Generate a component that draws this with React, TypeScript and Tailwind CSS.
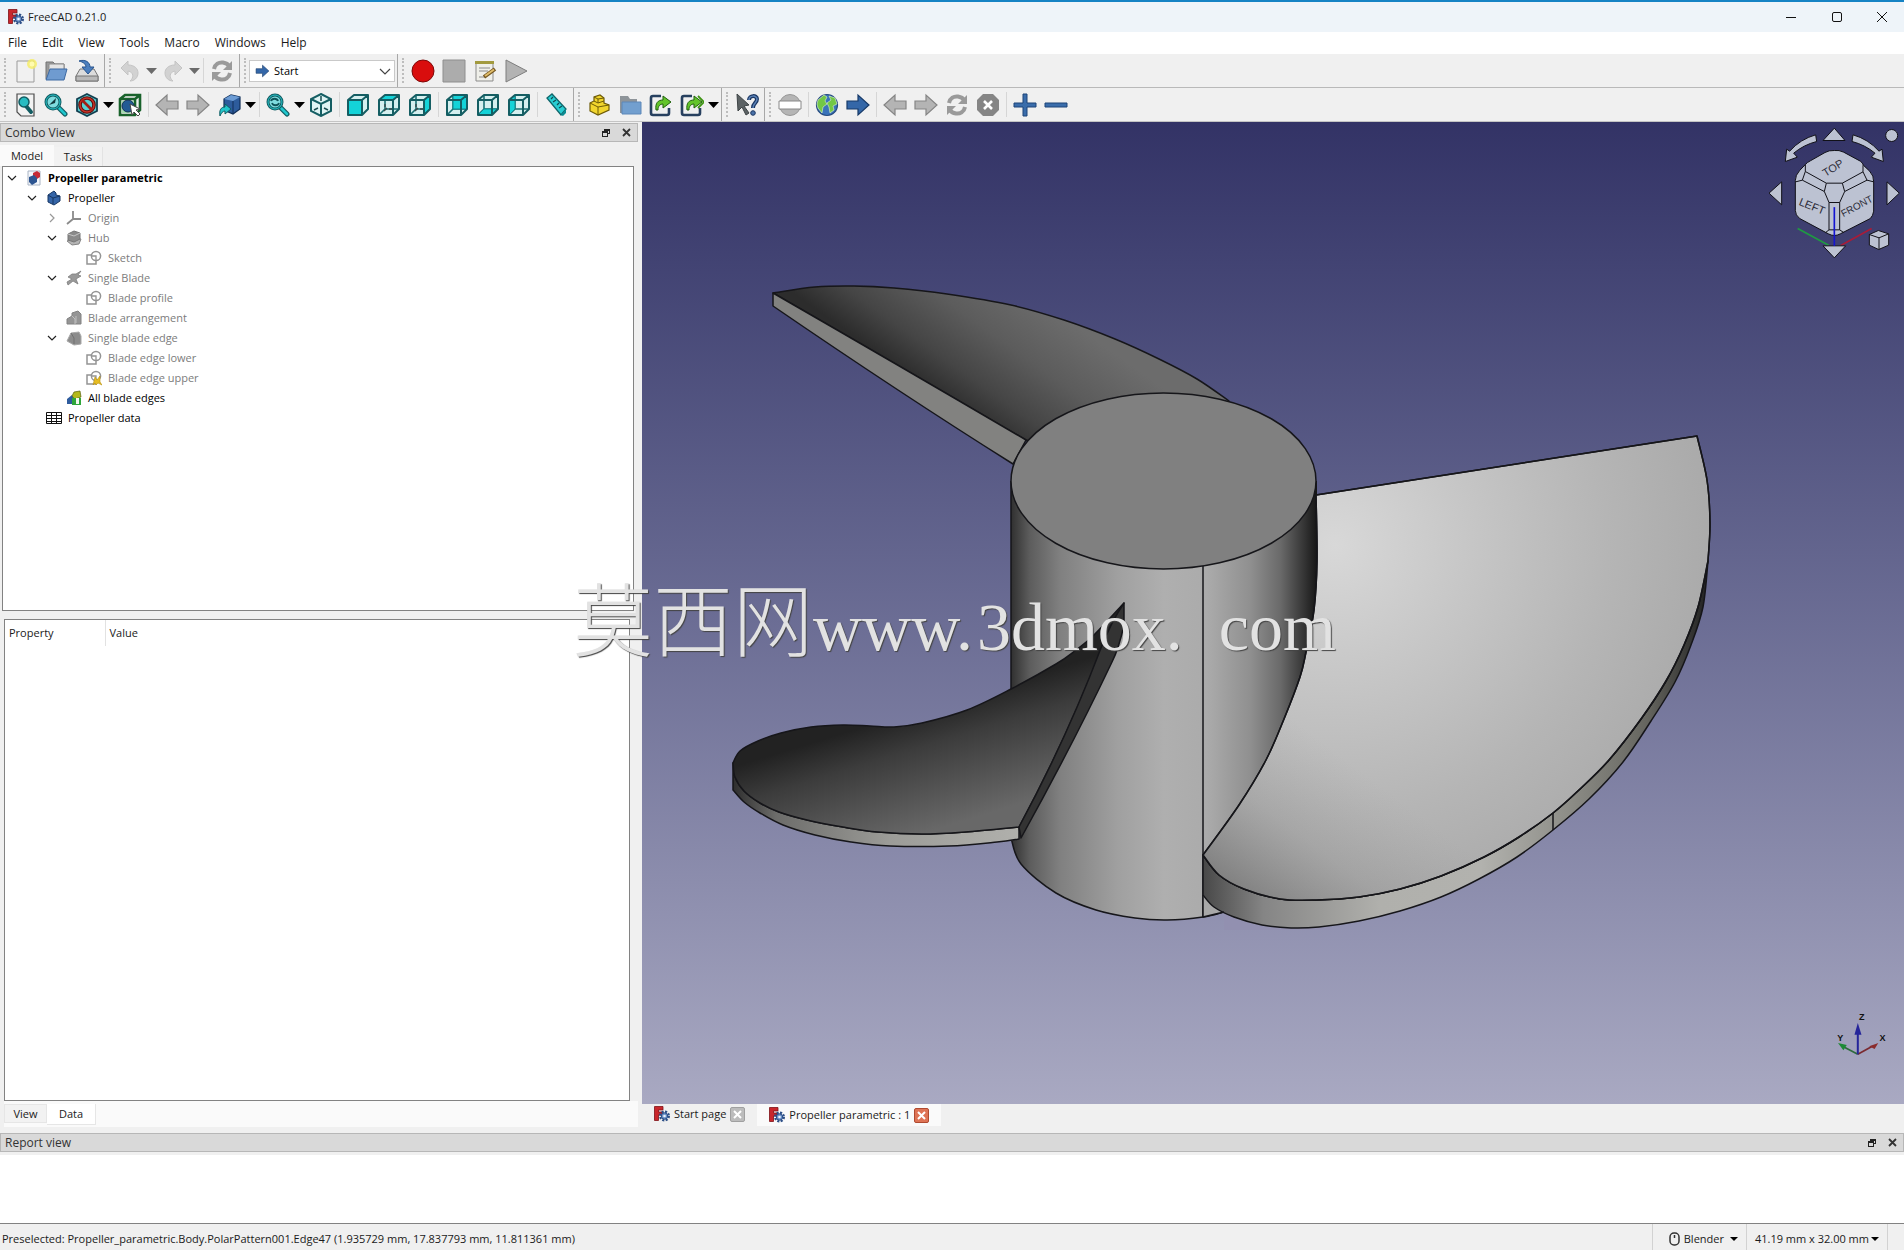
import React from 'react';

type Pt = [number, number];

// Catmull-Rom spline through the points, written as cubic segments
function curve(pts: Pt[]) {
  return pts
    .slice(0, -1)
    .map((p1, i) => {
      const p0 = pts[i - 1] || p1;
      const p2 = pts[i + 1];
      const p3 = pts[i + 2] || p2;
      const c1 = [p1[0] + (p2[0] - p0[0]) / 6, p1[1] + (p2[1] - p0[1]) / 6];
      const c2 = [p2[0] - (p3[0] - p1[0]) / 6, p2[1] - (p3[1] - p1[1]) / 6];
      return `C${c1.join(' ')} ${c2.join(' ')} ${p2.join(' ')}`;
    })
    .join(' ');
}

const start = (p: Pt) => `M${p[0]} ${p[1]} `;
const back = (pts: Pt[]) => [...pts].reverse();

/* ---------- Toolbar icons ---------- */

function Icon({ children, size = 24 }: { children: React.ReactNode; size?: number }) {
  return (
    <svg width={size} height={size} viewBox="0 0 24 24" fill="none" aria-hidden="true">
      {children}
    </svg>
  );
}

const CUBE_FACES: Record<string, string> = {
  front: 'M2 7H16V22H2Z',
  top: 'M2 7L8 2H22L16 7Z',
  right: 'M16 7L22 2V16L16 22Z',
  rear: 'M8 2H22V16H8Z',
  bottom: 'M2 22L8 16H22L16 22Z',
  left: 'M2 7L8 2V16L2 22Z',
};

function CubeIcon({ face }: { face: string }) {
  return (
    <Icon>
      <path d="M2 7L8 2H22V16L16 22H2Z" fill="#d5efef" />
      {face !== 'front' && <path d="M8 2V16H22M8 16L2 22" stroke="#1a7074" strokeWidth="1.6" />}
      <path d={CUBE_FACES[face]} fill="#14d3d8" stroke="#0d8a90" />
      <path d="M2 7H16V22H2ZM2 7L8 2H22V16L16 22M16 7L22 2" stroke="#155e63" strokeWidth="2" strokeLinejoin="round" />
      {(face === 'top' || face === 'right') && <path d="M7 18L10 15M8 11V14M12 16H15" stroke="#3a4a4c" strokeWidth="1.4" />}
    </Icon>
  );
}

function LensIcon({ inner }: { inner?: React.ReactNode }) {
  return (
    <Icon>
      <path d="M14 14L21 21" stroke="#125c62" strokeWidth="5" strokeLinecap="round" />
      <path d="M14 14L21 21" stroke="#1fc6cc" strokeWidth="2.6" strokeLinecap="round" />
      <circle cx="9" cy="9" r="7" fill="#7fdcdf" stroke="#125c62" strokeWidth="3" />
      <circle cx="9" cy="9" r="7" stroke="#25c3c9" strokeWidth="1" />
      {inner}
    </Icon>
  );
}

function ArrowIcon({ dir, blue }: { dir: 'left' | 'right'; blue?: boolean }) {
  return (
    <Icon>
      <path
        d={dir === 'right' ? 'M1 8H12V2L23 12L12 22V16H1Z' : 'M23 8H12V2L1 12L12 22V16H23Z'}
        fill={blue ? '#3467a8' : '#b4b4b4'}
        stroke={blue ? '#173a68' : '#858585'}
        strokeWidth="1.2"
      />
    </Icon>
  );
}

function RefreshIcon() {
  return (
    <Icon>
      <path d="M4 10C5 5 9 3 13 3.500C16 4 18 5 19 7" stroke="#9a9a9a" strokeWidth="4" />
      <path d="M22 2V11H13Z" fill="#9a9a9a" />
      <path d="M20 14C19 19 15 21 11 20.500C8 20 6 19 5 17" stroke="#9a9a9a" strokeWidth="4" />
      <path d="M2 22V13H11Z" fill="#9a9a9a" />
    </Icon>
  );
}

function UndoIcon({ flip }: { flip?: boolean }) {
  return (
    <Icon>
      <g transform={flip ? 'translate(24 0) scale(-1 1)' : undefined}>
        <path d="M3 9L10 2V6C17 6 20 10 20 14C20 19 16 22 12 22C16 19 16 13 10 12V16Z" fill="#d2d2d2" stroke="#c4c4c4" />
      </g>
    </Icon>
  );
}

function ExportIcon({ double }: { double?: boolean }) {
  return (
    <Icon>
      <path d="M12 3H4Q2 3 2 5V20Q2 22 4 22H18Q20 22 20 20V15" stroke="#27405f" strokeWidth="2.600" />
      <path d="M7 17C6 10 9 7 14 7V3L22 9L14 15V11C11 11 9 13 9 17Z" fill="#63c42a" stroke="#20610c" />
      {double && <path d="M18 3L24 9L18 15" stroke="#3f9414" strokeWidth="1.8" />}
    </Icon>
  );
}

const NewIcon = () => (
  <Icon>
    <path d="M4 2H21V23H4Z" fill="#f1f1f1" stroke="#9b9b9b" />
    <circle cx="19" cy="5" r="5" fill="#f6ee62" opacity="0.8" />
    <circle cx="19" cy="5" r="2.500" fill="#fffbb0" />
  </Icon>
);
const OpenIcon = () => (
  <Icon>
    <path d="M2 20V3H9L11 5H20V20Z" fill="#9a9a9a" stroke="#737373" />
    <path d="M5 5H20V12H5Z" fill="#e4e4e4" stroke="#8d8d8d" />
    <path d="M6 10H23L20 21H2Z" fill="#6f9bd0" stroke="#3e6aa3" />
  </Icon>
);
const SaveIcon = () => (
  <Icon>
    <path d="M5 10H19L23 17V22H1V17Z" fill="#dcdcdc" stroke="#757575" />
    <path d="M1 17H23V22H1Z" fill="#b9b9b9" stroke="#757575" />
    <path d="M4 2C10 0 15 3 15 8H19L13 15L7 8H11C11 5 8 3 4 2Z" fill="#4c7fbe" stroke="#28558f" />
  </Icon>
);
const NotepadIcon = () => (
  <Icon>
    <path d="M3 3H20V22H3Z" fill="#efefe9" stroke="#8b8b8b" />
    <path d="M2 2H21V5H2Z" fill="#a29a3e" />
    <path d="M6 9H17M6 12H15M6 18H12" stroke="#8b8b8b" />
    <path d="M11 18L22 10" stroke="#75561f" strokeWidth="4" />
    <path d="M12 17L21 10.500" stroke="#e0bd6a" strokeWidth="2" />
  </Icon>
);
const FitAllIcon = () => (
  <Icon>
    <path d="M4 1H21V23H8L4 19Z" fill="#f2f2f2" stroke="#4d4d4d" strokeWidth="1.200" />
    <path d="M13 13L18 19" stroke="#125c62" strokeWidth="4" strokeLinecap="round" />
    <circle cx="11" cy="9" r="5" fill="#28bcc2" stroke="#125c62" strokeWidth="1.500" />
  </Icon>
);
const DrawStyleIcon = () => (
  <Icon>
    <path d="M12 1L22 6V18L12 23L2 18V6Z" fill="#58cfd2" stroke="#123f50" strokeWidth="1.800" />
    <circle cx="12" cy="12" r="7" stroke="#5c0d0d" strokeWidth="3.600" />
    <circle cx="12" cy="12" r="7" stroke="#c63327" strokeWidth="1.600" />
    <path d="M7 7L17 17" stroke="#a41c16" strokeWidth="2.600" />
  </Icon>
);
const SelectBoxIcon = () => (
  <Icon>
    <path d="M2 6L7 2H22V17L17 22H2Z M2 6H17V22M17 6L22 2" stroke="#18622b" strokeWidth="2.600" />
    <path d="M4 8H16V20H4Z" fill="#a4dcb0" />
    <circle cx="10" cy="13" r="6" fill="#235a94" stroke="#132f55" />
    <path d="M12 11L22 16L18 17L22 21L20 23L16 19L14 22Z" fill="#fff" stroke="#474747" />
  </Icon>
);
const LinkViewIcon = () => (
  <Icon>
    <path d="M7 6L14 2L23 4V16L16 21L7 17Z" fill="#2d5c9c" stroke="#122f59" strokeWidth="1.200" />
    <path d="M7 6L16 8L23 4L14 2Z" fill="#6b9bd4" />
    <path d="M16 8V21" stroke="#122f59" />
    <path d="M3 23C2 17 4 14 8 14V11L14 16L8 21V18C6 18 4 20 3 23Z" fill="#22c5ca" stroke="#125c62" />
  </Icon>
);
const IsoIcon = () => (
  <Icon>
    <path d="M12 1L22 6V18L12 23L2 18V6Z" fill="#dff4f4" stroke="#155e63" strokeWidth="2" />
    <path d="M2 6L12 11L22 6M12 11V23" stroke="#155e63" strokeWidth="2" />
    <path d="M12 3V8M5 17L9 15M19 17L15 15" stroke="#1b4c50" strokeWidth="1.500" />
  </Icon>
);
const MeasureIcon = () => (
  <Icon>
    <path d="M3 5L8 1L22 16L17 22Z" fill="#28cdd2" stroke="#0f666b" strokeWidth="1.300" />
    <path d="M9 4L7 6M12 7L9 9M15 10L13 12M18 13L15 15" stroke="#0f4b50" strokeWidth="1.200" />
    <path d="M17 22L22 16V20L19 23Z" fill="#0b8d93" />
  </Icon>
);
const PartIcon = () => (
  <Icon>
    <path d="M3 10L7 8V4L13 2L17 5V10L22 12V17L11 22L3 18Z" fill="#f1d52d" stroke="#6f5c07" strokeWidth="1.200" />
    <path d="M3 10L11 14V22M11 14L22 12M7 8L11 10L17 8M7 4L11 6L17 5M11 6V10" stroke="#6f5c07" />
  </Icon>
);
const GroupIcon = () => (
  <Icon>
    <path d="M2 20V3H10L12 6H19V20Z" fill="#8e9499" />
    <path d="M4 9H23V21H4Z" fill="#729fcf" stroke="#5d87b8" />
  </Icon>
);
const WhatsThisIcon = () => (
  <Icon>
    <path d="M2 1L14 12L9 13L14 20L11 22L7 14L3 18Z" fill="#5c6264" stroke="#3e4446" />
    <path d="M14 7C14 2 22 2 22 6C22 10 18 10 18 15" stroke="#1c3763" strokeWidth="4" />
    <path d="M14 7C14 2 22 2 22 6C22 10 18 10 18 15" stroke="#5b83b9" strokeWidth="1.500" />
    <circle cx="18" cy="20" r="2.300" fill="#4a72a8" stroke="#1c3763" />
  </Icon>
);
const UrlIcon = () => (
  <Icon>
    <circle cx="12" cy="12" r="10.500" fill="#b5b5b5" stroke="#979797" />
    <path d="M1 8H23V16H1Z" fill="#fff" stroke="#888" />
  </Icon>
);
const GlobeIcon = () => (
  <Icon>
    <circle cx="12" cy="12" r="10.500" fill="#3a73ba" stroke="#274c80" strokeWidth="1.200" />
    <path d="M3 7L9 2L12 4L10 8L12 11L8 14L7 20L3 15L2 11ZM14 3L20 5L22 11L18 13L19 17L15 20L14 14L12 10L16 7Z" fill="#72c746" stroke="#e5f3cf" strokeWidth="0.600" />
  </Icon>
);
const StopLoadIcon = () => (
  <Icon>
    <path d="M7 1H17L23 7V17L17 23H7L1 17V7Z" fill="#858585" />
    <path d="M8 8L16 16M16 8L8 16" stroke="#fff" strokeWidth="2.600" />
  </Icon>
);
const PlusIcon = () => (
  <Icon>
    <path d="M10 1H14V10H23V14H14V23H10V14H1V10H10Z" fill="#3a6dab" stroke="#1d4478" />
  </Icon>
);
const MinusIcon = () => (
  <Icon>
    <path d="M1 10H23V14H1Z" fill="#3a6dab" stroke="#1d4478" />
  </Icon>
);

function FreeCadLogo({ size = 16 }: { size?: number }) {
  return (
    <svg width={size} height={size} viewBox="0 0 16 16" fill="none" aria-hidden="true">
      <path d="M0.500 0.500H9V4H4.500V6H8V9H4.500V14.500H0.500Z" fill="#c9262b" stroke="#7d1216" strokeWidth="0.800" />
      <circle cx="10.500" cy="10" r="4.200" stroke="#2d4f87" strokeWidth="2.600" strokeDasharray="2 1.300" />
      <circle cx="10.500" cy="10" r="3.200" fill="#6e93c9" stroke="#2d4f87" />
      <circle cx="10.500" cy="10" r="1.300" fill="#eef3fa" />
    </svg>
  );
}

/* ---------- Toolbar parts ---------- */

function ToolButton({ label, children }: { label: string; children: React.ReactNode }) {
  return (
    <button type="button" aria-label={label} className="flex h-[34px] w-[31px] shrink-0 items-center justify-center">
      {children}
    </button>
  );
}

function DropArrow({ label, muted }: { label: string; muted?: boolean }) {
  return (
    <button type="button" aria-label={label} className="flex h-[34px] w-3 shrink-0 items-center justify-center">
      <svg width="11" height="6" viewBox="0 0 11 6" className="shrink-0">
        <path d="M0 0H11L5.500 6Z" fill={muted ? '#6b6b6b' : '#000'} />
      </svg>
    </button>
  );
}

const Handle = () => (
  <div className="flex w-[9px] shrink-0 justify-center py-1">
    <div className="h-full border-l-2 border-dotted border-[#bdbdbd]" />
  </div>
);
const Separator = () => (
  <div className="flex w-[6px] shrink-0 justify-center py-1">
    <div className="h-full border-l border-[#d6d6d6]" />
  </div>
);
const BarEnd = () => <div className="w-[3px] shrink-0 border-r border-[#a8a8a8]" />;

function FileToolbar() {
  return (
    <div className="flex h-[34px] items-stretch border-b border-[#b9b9b9]">
      <Handle />
      <ToolButton label="New"><NewIcon /></ToolButton>
      <ToolButton label="Open"><OpenIcon /></ToolButton>
      <ToolButton label="Save"><SaveIcon /></ToolButton>
      <BarEnd />
      <Handle />
      <ToolButton label="Undo"><UndoIcon /></ToolButton>
      <DropArrow label="Undo history" muted />
      <ToolButton label="Redo"><UndoIcon flip /></ToolButton>
      <DropArrow label="Redo history" muted />
      <Separator />
      <ToolButton label="Refresh"><RefreshIcon /></ToolButton>
      <BarEnd />
      <Handle />
      <div className="relative my-auto h-[22px] w-[146px]">
        <select
          aria-label="Workbench"
          className="h-full w-full appearance-none border border-[#c9c9c9] bg-white pl-6 text-[11px] text-black"
        >
          <option>Start</option>
        </select>
        <span className="pointer-events-none absolute left-1.5 top-1">
          <svg width="15" height="14" viewBox="0 0 24 24">
            <path d="M1 8H12V2L23 12L12 22V16H1Z" fill="#3467a8" stroke="#173a68" />
          </svg>
        </span>
        <svg width="12" height="7" viewBox="0 0 12 7" fill="none" className="pointer-events-none absolute right-1 top-2">
          <path d="M1 1L6 6L11 1" stroke="#444" strokeWidth="1.200" />
        </svg>
      </div>
      <BarEnd />
      <Handle />
      <ToolButton label="Record macro">
        <Icon><circle cx="12" cy="12" r="11" fill="#d90d0d" stroke="#7d0808" /></Icon>
      </ToolButton>
      <ToolButton label="Stop macro">
        <Icon><path d="M1 1H23V23H1Z" fill="#acacac" stroke="#8e8e8e" /></Icon>
      </ToolButton>
      <ToolButton label="Macros"><NotepadIcon /></ToolButton>
      <ToolButton label="Run macro">
        <Icon><path d="M2 1L23 12L2 23Z" fill="#b3b3b3" stroke="#7e7e7e" /></Icon>
      </ToolButton>
    </div>
  );
}

function ViewToolbar() {
  return (
    <div className="flex h-[34px] items-stretch border-b border-[#c4c4c4]">
      <Handle />
      <ToolButton label="Fit all"><FitAllIcon /></ToolButton>
      <ToolButton label="Fit selection">
        <LensIcon inner={<path d="M5 12L12 5L11 10Z" fill="#12393c" />} />
      </ToolButton>
      <ToolButton label="Draw style"><DrawStyleIcon /></ToolButton>
      <DropArrow label="Draw style options" />
      <ToolButton label="Box selection"><SelectBoxIcon /></ToolButton>
      <Separator />
      <ToolButton label="Previous selection"><ArrowIcon dir="left" /></ToolButton>
      <ToolButton label="Next selection"><ArrowIcon dir="right" /></ToolButton>
      <ToolButton label="Go to linked object"><LinkViewIcon /></ToolButton>
      <DropArrow label="Link options" />
      <Separator />
      <ToolButton label="Sync view">
        <LensIcon inner={<path d="M5 8C6 5 11 5 12 8M13 10C12 13 7 13 6 10" stroke="#0e5459" strokeWidth="1.800" />} />
      </ToolButton>
      <DropArrow label="Sync view options" />
      <ToolButton label="Isometric"><IsoIcon /></ToolButton>
      <Separator />
      <ToolButton label="Front"><CubeIcon face="front" /></ToolButton>
      <ToolButton label="Top"><CubeIcon face="top" /></ToolButton>
      <ToolButton label="Right"><CubeIcon face="right" /></ToolButton>
      <Separator />
      <ToolButton label="Rear"><CubeIcon face="rear" /></ToolButton>
      <ToolButton label="Bottom"><CubeIcon face="bottom" /></ToolButton>
      <ToolButton label="Left"><CubeIcon face="left" /></ToolButton>
      <Separator />
      <ToolButton label="Measure distance"><MeasureIcon /></ToolButton>
      <BarEnd />
      <Handle />
      <ToolButton label="Create part"><PartIcon /></ToolButton>
      <ToolButton label="Create group"><GroupIcon /></ToolButton>
      <ToolButton label="Make link"><ExportIcon /></ToolButton>
      <ToolButton label="Make sub-link"><ExportIcon double /></ToolButton>
      <DropArrow label="Link actions" />
      <BarEnd />
      <Handle />
      <ToolButton label="What's this?"><WhatsThisIcon /></ToolButton>
      <BarEnd />
      <Handle />
      <ToolButton label="Set URL"><UrlIcon /></ToolButton>
      <Separator />
      <ToolButton label="Open website"><GlobeIcon /></ToolButton>
      <ToolButton label="Start page"><ArrowIcon dir="right" blue /></ToolButton>
      <Separator />
      <ToolButton label="Previous page"><ArrowIcon dir="left" /></ToolButton>
      <ToolButton label="Next page"><ArrowIcon dir="right" /></ToolButton>
      <ToolButton label="Refresh page"><RefreshIcon /></ToolButton>
      <ToolButton label="Stop loading"><StopLoadIcon /></ToolButton>
      <Separator />
      <ToolButton label="Zoom in"><PlusIcon /></ToolButton>
      <ToolButton label="Zoom out"><MinusIcon /></ToolButton>
    </div>
  );
}

/* ---------- Dock panels ---------- */

function DockTitle({ title }: { title: string }) {
  return (
    <div className="flex h-[19px] shrink-0 items-center border border-[#b7b7b7] bg-[#d9d9d9] pl-1 pr-1.5">
      <h2 className="grow text-[12px] text-[#333]">{title}</h2>
      <button type="button" aria-label={`Float ${title}`} className="mr-3">
        <svg width="9" height="9" viewBox="0 0 9 9" fill="none" shapeRendering="crispEdges">
          <path d="M3 1H8V5H6M3 1V3M1 3H6V8H1ZM1 4H6M3 2H8" stroke="#222" />
        </svg>
      </button>
      <button type="button" aria-label={`Close ${title}`}>
        <svg width="9" height="9" viewBox="0 0 9 9">
          <path d="M1 1L8 8M8 1L1 8" stroke="#333" strokeWidth="1.800" />
        </svg>
      </button>
    </div>
  );
}

function TreeIcon({ kind }: { kind: string }) {
  return (
    <svg width="16" height="16" viewBox="0 0 16 16" fill="none" className="shrink-0" aria-hidden="true">
      {kind === 'doc' && (
        <>
          <path d="M2 1H14V15H2Z" fill="#f5f7fb" stroke="#a9b4c4" />
          <path d="M7 3L11 1L14 3V7L11 9L7 7Z" fill="#c62a36" />
          <path d="M3 7L8 5L11 8V12L6 15L3 12Z" fill="#2d5591" />
        </>
      )}
      {kind === 'body' && (
        <>
          <path d="M2 5L8 1L10 3V5L14 6V11L8 15L2 12Z" fill="#3565a8" stroke="#173763" />
          <path d="M2 5L7 8L14 6M7 8V14" stroke="#173763" />
        </>
      )}
      {kind === 'origin' && <path d="M7 1V9L1 14M7 9H15" stroke="#8b8b8b" strokeWidth="1.800" />}
      {kind === 'pad' && (
        <>
          <path d="M1 11L5 9H15L13 14L6 15Z" fill="#b5b5b5" stroke="#858585" />
          <path d="M2 4L8 1L14 3V9L8 12L2 10Z" fill="#8a8a8a" stroke="#777" />
          <path d="M2 4L8 6L14 3" stroke="#c5c5c5" />
        </>
      )}
      {(kind === 'sketch' || kind === 'sketchWarn') && (
        <>
          <path d="M1 5H10V14H1Z" stroke="#949494" strokeWidth="1.500" />
          <circle cx="10" cy="6" r="4.600" fill="#fff" stroke="#949494" strokeWidth="1.500" />
          <path d="M6 6H10V10" stroke="#949494" strokeWidth="1.300" />
        </>
      )}
      {kind === 'sketchWarn' && (
        <path d="M7 15L9 7L11 10L14 6V12L16 15L12 13L10 15L9 13Z" fill="#e6bc22" stroke="#b8900c" strokeWidth="0.600" />
      )}
      {kind === 'helix' && (
        <path d="M1 12L6 9L2 7L6 4L10 4L15 1L12 5L15 6L10 9L12 14L7 11L2 15Z" fill="#999" stroke="#7f7f7f" strokeWidth="0.800" />
      )}
      {kind === 'pattern' && (
        <>
          <path d="M1 14V9L6 6V3L12 1L15 4V14Z" fill="#959595" stroke="#828282" />
          <path d="M6 6L9 9V14M10 6V13" stroke="#c0c0c0" />
        </>
      )}
      {kind === 'fillet' && (
        <>
          <path d="M1 11L5 3L13 2L15 6V14L8 15Z" fill="#8c8c8c" stroke="#a8a8a8" />
          <path d="M5 3L8 8V14" stroke="#707070" />
        </>
      )}
      {kind === 'multi' && (
        <>
          <path d="M1 14V9L6 5L8 9V14Z" fill="#2f5c9e" />
          <path d="M6 6L8 2L14 1L15 7L9 9Z" fill="#b3b91c" stroke="#56600a" strokeWidth="0.700" />
          <path d="M6 8H15V15H6Z" fill="#2fa63a" />
          <path d="M10 8H13V14H10Z" fill="#f4f8f0" />
        </>
      )}
      {kind === 'sheet' && (
        <path d="M0.500 2.500H15.500V13.500H0.500ZM0.500 5.500H15.500M0.500 8.500H15.500M0.500 11.500H15.500M5.500 2.500V13.500M10.500 2.500V13.500" stroke="#111" />
      )}
    </svg>
  );
}

interface TreeRow {
  label: string;
  icon: string;
  indent: string;
  open?: boolean;
  toggle?: boolean;
  tone?: string;
}

const TREE: TreeRow[] = [
  { label: 'Propeller parametric', icon: 'doc', indent: 'pl-0', toggle: true, open: true, tone: 'font-bold text-black' },
  { label: 'Propeller', icon: 'body', indent: 'pl-5', toggle: true, open: true, tone: 'text-black' },
  { label: 'Origin', icon: 'origin', indent: 'pl-10', toggle: true },
  { label: 'Hub', icon: 'pad', indent: 'pl-10', toggle: true, open: true },
  { label: 'Sketch', icon: 'sketch', indent: 'pl-[60px]' },
  { label: 'Single Blade', icon: 'helix', indent: 'pl-10', toggle: true, open: true },
  { label: 'Blade profile', icon: 'sketch', indent: 'pl-[60px]' },
  { label: 'Blade arrangement', icon: 'pattern', indent: 'pl-10' },
  { label: 'Single blade edge', icon: 'fillet', indent: 'pl-10', toggle: true, open: true },
  { label: 'Blade edge lower', icon: 'sketch', indent: 'pl-[60px]' },
  { label: 'Blade edge upper', icon: 'sketchWarn', indent: 'pl-[60px]' },
  { label: 'All blade edges', icon: 'multi', indent: 'pl-10', tone: 'text-black' },
  { label: 'Propeller data', icon: 'sheet', indent: 'pl-5', tone: 'text-black' },
];

function ModelTree() {
  return (
    <ul className="ml-0.5 mr-1 min-h-0 grow-[444] basis-0 overflow-hidden border border-[#828282] bg-white pt-px">
      {TREE.map((row) => (
        <li key={row.label} className={`flex h-5 items-center ${row.indent}`}>
          <span className="flex w-[23px] shrink-0 items-center pl-1">
            {row.toggle && (
              <button type="button" aria-label={`Toggle ${row.label}`}>
                <svg width="10" height="10" viewBox="0 0 10 10" fill="none">
                  <path d={row.open ? 'M1 3L5 7L9 3' : 'M3 1L7 5L3 9'} stroke={row.open ? '#222' : '#999'} strokeWidth="1.200" />
                </svg>
              </button>
            )}
          </span>
          <TreeIcon kind={row.icon} />
          <span className={`ml-1.5 ${row.tone || 'text-[#7c7c7c]'}`}>{row.label}</span>
        </li>
      ))}
    </ul>
  );
}

function ComboView() {
  return (
    <aside className="flex w-[642px] shrink-0 flex-col pr-1 pt-px">
      <DockTitle title="Combo View" />
      <div className="mt-[3px] flex h-[21px] shrink-0">
        <button type="button" className="h-full w-[54px] bg-[#fafafa]">Model</button>
        <button type="button" className="mt-0.5 w-[49px] border-r border-[#e3e3e3] bg-[#f2f2f2]">Tasks</button>
      </div>
      <ModelTree />
      <div className="h-2 shrink-0" />
      <div className="ml-1 mr-2 min-h-0 grow-[482] basis-0 border border-[#828282] bg-white">
        <table className="w-full text-left">
          <thead>
            <tr className="h-[26px]">
              <th scope="col" className="w-[100px] border-r border-[#e2e2e2] pl-1 font-normal">Property</th>
              <th scope="col" className="pl-1 font-normal">Value</th>
            </tr>
          </thead>
        </table>
      </div>
      <div className="ml-1 flex h-[26px] shrink-0 items-start bg-[#fafafa]">
        <button type="button" className="mt-[3px] h-[19px] w-[43px] border border-[#e6e6e6] bg-[#f2f2f2]">View</button>
        <button type="button" className="mt-[3px] h-[21px] w-[49px] border-r border-b border-[#e6e6e6] bg-white">Data</button>
      </div>
    </aside>
  );
}

/* ---------- 3D scene ---------- */

const BACK_BLADE_TOP: Pt[] = [[773, 293], [815, 287], [854, 286], [894, 288], [947, 294], [1011, 305], [1064, 320], [1115, 339], [1159, 359], [1197, 379], [1229, 401]];
const LEFT_BLADE_TOP: Pt[] = [[733, 763], [740, 751], [758, 741], [781, 733], [811, 727], [843, 725], [870, 726], [894, 727], [922, 723], [967, 710], [1011, 689], [1056, 664], [1076, 650], [1094, 635], [1124, 603]];
const LEFT_BLADE_RIM: Pt[] = [[733, 763], [735, 777], [744, 791], [760, 803], [779, 812], [807, 820], [843, 827], [878, 832], [922, 834], [965, 832], [1019, 827]];
const LEFT_BLADE_LOW: Pt[] = [[733, 790], [744, 802], [760, 813], [783, 825], [815, 835], [851, 842], [890, 846], [949, 846], [997, 842], [1019, 839]];
const HUB_LOW: Pt[] = [[1011, 838], [1021, 864], [1056, 893], [1096, 910], [1135, 918], [1167, 920], [1203, 917], [1224, 912]];
const FRONT_EDGE: Pt[] = [[1316, 495], [1317, 561], [1314, 610], [1306, 652], [1300, 677], [1284, 719], [1266, 760], [1239, 805], [1203, 855]];
const FRONT_TIP: Pt[] = [[1697, 436], [1707, 480], [1710, 523], [1708, 561]];
const FRONT_RIM: Pt[] = [[1708, 561], [1698, 607], [1684, 645], [1666, 681], [1641, 719], [1609, 760], [1580, 789], [1553, 813], [1519, 837], [1484, 857], [1441, 876], [1400, 889], [1359, 897], [1316, 900], [1280, 899], [1244, 889], [1219, 875], [1203, 855]];
const FRONT_LOW: Pt[] = [[1708, 561], [1703, 607], [1691, 645], [1675, 682], [1651, 721], [1623, 762], [1589, 799], [1553, 830], [1517, 857], [1479, 879], [1441, 897], [1400, 911], [1359, 921], [1319, 927], [1291, 928], [1262, 925], [1234, 917], [1214, 907], [1203, 895]];

const FRONT_FACE = start(FRONT_EDGE[0]) + 'L1697 436' + curve(FRONT_TIP) + curve(FRONT_RIM) + curve(back(FRONT_EDGE)) + 'Z';

function PropellerModel() {
  return (
    <svg viewBox="642 122 1262 982" className="h-full w-full" role="img" aria-label="Propeller">
      <defs>
        <linearGradient id="hub" gradientUnits="userSpaceOnUse" x1="1011" y1="0" x2="1317" y2="0">
          <stop offset="0" stopColor="#303030" />
          <stop offset="0.06" stopColor="#5c5c5c" />
          <stop offset="0.16" stopColor="#808080" />
          <stop offset="0.35" stopColor="#a0a0a0" />
          <stop offset="0.5" stopColor="#afafaf" />
          <stop offset="0.64" stopColor="#ababab" />
          <stop offset="0.78" stopColor="#909090" />
          <stop offset="0.88" stopColor="#6a6a6a" />
          <stop offset="0.96" stopColor="#333" />
          <stop offset="1" stopColor="#161616" />
        </linearGradient>
        <linearGradient id="backBlade" gradientUnits="userSpaceOnUse" x1="960" y1="412" x2="1040" y2="300">
          <stop offset="0" stopColor="#2c2c2c" />
          <stop offset="0.25" stopColor="#454545" />
          <stop offset="0.6" stopColor="#5c5c5c" />
          <stop offset="1" stopColor="#6c6c6c" />
        </linearGradient>
        <linearGradient id="leftBlade" gradientUnits="userSpaceOnUse" x1="880" y1="722" x2="915" y2="836">
          <stop offset="0" stopColor="#222" />
          <stop offset="0.3" stopColor="#3c3c3c" />
          <stop offset="0.65" stopColor="#525252" />
          <stop offset="1" stopColor="#686868" />
        </linearGradient>
        <linearGradient id="leftRim" gradientUnits="userSpaceOnUse" x1="733" y1="0" x2="1019" y2="0">
          <stop offset="0" stopColor="#2e2e2e" />
          <stop offset="0.15" stopColor="#6c6c6a" />
          <stop offset="0.55" stopColor="#9c9c98" />
          <stop offset="1" stopColor="#b0b0ac" />
        </linearGradient>
        <radialGradient id="frontBlade" gradientUnits="userSpaceOnUse" cx="1335" cy="545" r="390">
          <stop offset="0" stopColor="#d8d8d8" />
          <stop offset="0.35" stopColor="#c6c6c6" />
          <stop offset="0.7" stopColor="#b5b5b5" />
          <stop offset="1" stopColor="#a9a9a9" />
        </radialGradient>
        <linearGradient id="frontShade" gradientUnits="userSpaceOnUse" x1="1215" y1="880" x2="1320" y2="740">
          <stop offset="0" stopColor="#6a6a6a" stopOpacity="0.7" />
          <stop offset="0.5" stopColor="#808080" stopOpacity="0.25" />
          <stop offset="1" stopColor="#909090" stopOpacity="0" />
        </linearGradient>
        <linearGradient id="frontRim" gradientUnits="userSpaceOnUse" x1="1203" y1="0" x2="1708" y2="0">
          <stop offset="0" stopColor="#484848" />
          <stop offset="0.12" stopColor="#858585" />
          <stop offset="0.35" stopColor="#b0b0ac" />
          <stop offset="0.55" stopColor="#b2b2ae" />
          <stop offset="0.72" stopColor="#8e8e88" />
          <stop offset="0.88" stopColor="#65655f" />
          <stop offset="1" stopColor="#222" />
        </linearGradient>
      </defs>
      <g stroke="#16161a" strokeWidth="1.500" strokeLinejoin="round">
        {/* Rear blade */}
        <path d={start(BACK_BLADE_TOP[0]) + curve(BACK_BLADE_TOP) + 'L1100 460L1026 440Z'} fill="url(#backBlade)" />
        <path d="M773 293Q905 369 1026 440L1013 464Q900 393 773 306Z" fill="#828280" />
        {/* Hub */}
        <path d={'M1011 481V838' + curve(HUB_LOW) + 'L1317 800V481Z'} fill="url(#hub)" stroke="none" />
        <path d={'M1011 481V838' + curve(HUB_LOW)} fill="none" />
        <ellipse cx="1163.500" cy="481" rx="152.500" ry="88" fill="#808080" />
        <path d="M1203 566V917" />
        {/* Left blade */}
        <path
          d={start(LEFT_BLADE_RIM[0]) + curve(LEFT_BLADE_RIM) + 'V839' + curve(back(LEFT_BLADE_LOW)) + 'Z'}
          fill="url(#leftRim)"
        />
        <path
          d={start(LEFT_BLADE_TOP[0]) + curve(LEFT_BLADE_TOP) + 'L1102 648Q1066 740 1019 827' + curve(back(LEFT_BLADE_RIM)) + 'Z'}
          fill="url(#leftBlade)"
        />
        <path d="M1124 603V625Q1119 648 1112 662Q1073 744 1021 838L1019 827Q1066 740 1101 648Q1111 622 1124 603Z" fill="#333" />
      </g>
      {/* Background shows under the part of the hub the front blade cuts away */}
      <path d={'M1224 912L1203 917V855' + curve(back(FRONT_EDGE)) + 'L1330 495V930H1224Z'} fill="#9290b0" />
      <path d="M1203 890L1224 912L1203 917Z" fill="#a8a8a8" />
      <g stroke="#16161a" strokeWidth="1.500" strokeLinejoin="round">
        {/* Front blade */}
        <path d={start(FRONT_RIM[0]) + curve(FRONT_RIM) + 'V895' + curve(back(FRONT_LOW)) + 'Z'} fill="url(#frontRim)" />
        <path d={FRONT_FACE} fill="url(#frontBlade)" />
        <path d={FRONT_FACE} fill="url(#frontShade)" />
        <path d="M1553 813V830M1203 895V917L1224 912" fill="none" />
      </g>
    </svg>
  );
}

function NavigationCube() {
  return (
    <svg
      viewBox="80 45 405 410"
      className="absolute right-0.5 top-0.5 h-[137px] w-[135px]"
      stroke="#111118"
      strokeWidth="3"
      strokeLinejoin="round"
      fill="#bcc2d2"
      role="img"
      aria-label="Navigation cube"
    >
      <path d="M282 57L314 94H248Z" />
      <path d="M86 252L124 218V287Z" />
      <path d="M477 252L440 218V287Z" />
      <path d="M226 77L229 97Q190 107 160 132L171 144L135 157L139 120L148 126Q180 90 226 77Z" />
      <path d="M338 77L335 97Q374 107 404 132L393 144L429 157L425 120L416 126Q384 90 338 77Z" />
      <circle cx="454" cy="79" r="18" />
      <path d="M387 376L414 364L445 374V408L415 421L387 408Z" />
      <path d="M387 376L416 386L445 374M416 386V421" fill="none" />
      <path d="M172 358L265 408" stroke="#1f9a42" strokeWidth="5" />
      <path d="M394 358L300 410" stroke="#a81c38" strokeWidth="5" />
      <path d="M282 124Q296 122 310 129L360 156Q368 162 369 168L388 186Q401 200 400 218V306Q398 320 390 328L300 374Q282 384 264 374L178 328Q165 318 165 304V214Q165 198 178 184L195 166Q200 160 210 155L254 130Q266 123 282 124Z" />
      <path
        d="M195 166V187L258 222H306L368 188V168M258 222L252 247L266 280H298L313 247L306 222M195 187L186 213L252 247M368 188L380 213L313 247M186 213L166 218M380 213L400 218M266 280V362M298 280V362M256 370L266 362H298L310 370"
        fill="none"
      />
      <path d="M248 410H316L282 446Z" />
      <path d="M282 294V410" stroke="#1414d2" strokeWidth="5" />
      <g stroke="none" fill="#2c2c38" fontFamily="Liberation Sans, sans-serif" fontSize="33" textAnchor="middle">
        <text transform="translate(284 186) rotate(-32)">TOP</text>
        <text transform="translate(211 302) rotate(22)">LEFT</text>
        <text transform="translate(354 300) rotate(-28)" fontSize="30">FRONT</text>
      </g>
    </svg>
  );
}

function AxisCross() {
  return (
    <svg viewBox="285 95 155 140" className="absolute bottom-[46px] right-4 h-[47px] w-[52px]" role="img" aria-label="Axis cross">
      <path d="M350 224L310 203" stroke="#2d6b3c" strokeWidth="5" />
      <path d="M350 224L392 201" stroke="#7a2a30" strokeWidth="5" />
      <path d="M350 224V160" stroke="#25259a" strokeWidth="6" />
      <path d="M350 131L361 166H340Z" fill="#25259a" />
      <path d="M291 190L317 196L307 212Z" fill="#1d8a35" />
      <path d="M411 190L400 208L384 200Z" fill="#8b2b2b" />
      <g fill="#111" fontFamily="Liberation Sans, sans-serif" fontSize="27" fontWeight="bold" textAnchor="middle">
        <text x="362" y="122">Z</text>
        <text x="298" y="185">Y</text>
        <text x="424" y="185">X</text>
      </g>
    </svg>
  );
}

function Watermark() {
  return (
    <div className="pointer-events-none absolute -left-[69px] top-[438px] flex items-baseline whitespace-nowrap text-[#e2e2e2] [text-shadow:1px_1px_1px_#444]">
      <span className="font-['Noto_Sans_CJK_SC',sans-serif] text-[80px] leading-[110px] font-light">莫西网</span>
      <span className="font-['Liberation_Serif',serif] text-[68px]">www.</span>
      <span className="ml-1 font-['Liberation_Serif',serif] text-[68px]">3dmox.</span>
      <span className="ml-9 font-['Liberation_Serif',serif] text-[68px]">com</span>
    </div>
  );
}

function DocumentTab({ title, active }: { title: string; active?: boolean }) {
  return (
    <div className={active ? 'flex h-[22px] items-center gap-1 bg-[#fafafa] px-3' : 'flex h-5 items-center gap-1 px-3'}>
      <FreeCadLogo />
      <button type="button" className="whitespace-nowrap">{title}</button>
      <button
        type="button"
        aria-label={`Close ${title}`}
        className={active ? 'rounded-xs border border-[#b04a30] bg-[#de7355] p-0.5' : 'rounded-xs border border-[#a0a0a0] bg-[#bcbcbc] p-0.5'}
      >
        <svg width="9" height="9" viewBox="0 0 9 9">
          <path d="M1 1L8 8M8 1L1 8" stroke="#fff" strokeWidth="2" />
        </svg>
      </button>
    </div>
  );
}

/* ---------- Window ---------- */

const MENUS = ['File', 'Edit', 'View', 'Tools', 'Macro', 'Windows', 'Help'];

function TitleBar() {
  return (
    <header className="flex h-8 shrink-0 items-center border-t-2 border-[#1583c4] bg-[#eef4f9] pl-2">
      <FreeCadLogo />
      <h1 className="ml-1 grow">FreeCAD 0.21.0</h1>
      <button type="button" aria-label="Minimize" className="flex w-[46px] justify-center">
        <svg width="10" height="10" viewBox="0 0 10 10"><path d="M0 5.500H10" stroke="#111" /></svg>
      </button>
      <button type="button" aria-label="Maximize" className="flex w-[46px] justify-center">
        <svg width="10" height="10" viewBox="0 0 10 10" fill="none"><rect x="0.500" y="0.500" width="9" height="9" rx="1.500" stroke="#111" /></svg>
      </button>
      <button type="button" aria-label="Close" className="flex w-[44px] justify-center">
        <svg width="10" height="10" viewBox="0 0 10 10"><path d="M0 0L10 10M10 0L0 10" stroke="#111" /></svg>
      </button>
    </header>
  );
}

function StatusBar() {
  return (
    <footer className="flex h-[26px] shrink-0 items-stretch">
      <p className="grow self-center pl-0.5 pt-1">
        Preselected: Propeller_parametric.Body.PolarPattern001.Edge47 (1.935729 mm, 17.837793 mm, 11.811361 mm)
      </p>
      <button type="button" className="flex items-center gap-1 border-l border-[#d2d2d2] pl-4 pr-2 pt-1">
        <svg width="11" height="14" viewBox="0 0 11 14" fill="none">
          <rect x="1" y="1" width="9" height="12" rx="4" stroke="#333" strokeWidth="1.500" />
          <path d="M5.500 3V6" stroke="#333" strokeWidth="1.500" />
        </svg>
        Blender
        <svg width="8" height="4" viewBox="0 0 8 4" className="ml-0.5"><path d="M0 0H8L4 4Z" /></svg>
      </button>
      <button type="button" className="mr-4 flex items-center gap-0.5 border-x border-[#d2d2d2] px-2 pt-1">
        41.19 mm x 32.00 mm
        <svg width="8" height="4" viewBox="0 0 8 4"><path d="M0 0H8L4 4Z" /></svg>
      </button>
    </footer>
  );
}

function App() {
  return (
    <div className="flex h-screen flex-col overflow-hidden bg-[#f0f0f0] font-['Open_Sans','Noto_Sans',sans-serif] text-[11px] leading-4 text-[#1a1a1a]">
      <TitleBar />
      <nav className="flex h-[22px] shrink-0 items-center bg-white pl-0.5 text-[12px]">
        {MENUS.map((menu) => (
          <button key={menu} type="button" className="pl-1.5 pr-[9px]">{menu}</button>
        ))}
      </nav>
      <FileToolbar />
      <ViewToolbar />

      <div className="flex min-h-0 grow">
        <ComboView />
        <main className="flex min-w-0 grow flex-col">
          <div className="relative min-h-0 grow bg-linear-to-b from-[#333366] to-[#a9a9c2]">
            <PropellerModel />
            <NavigationCube />
            <AxisCross />
            <Watermark />
          </div>
          <div className="flex h-[23px] shrink-0 items-start">
            <DocumentTab title="Start page" />
            <DocumentTab title="Propeller parametric : 1" active />
          </div>
        </main>
      </div>

      <section className="mt-1.5 flex shrink-0 flex-col">
        <DockTitle title="Report view" />
        <div className="mt-[3px] h-[69px] border-b border-[#828282] bg-white" />
      </section>
      <StatusBar />
    </div>
  );
}

export default App;
